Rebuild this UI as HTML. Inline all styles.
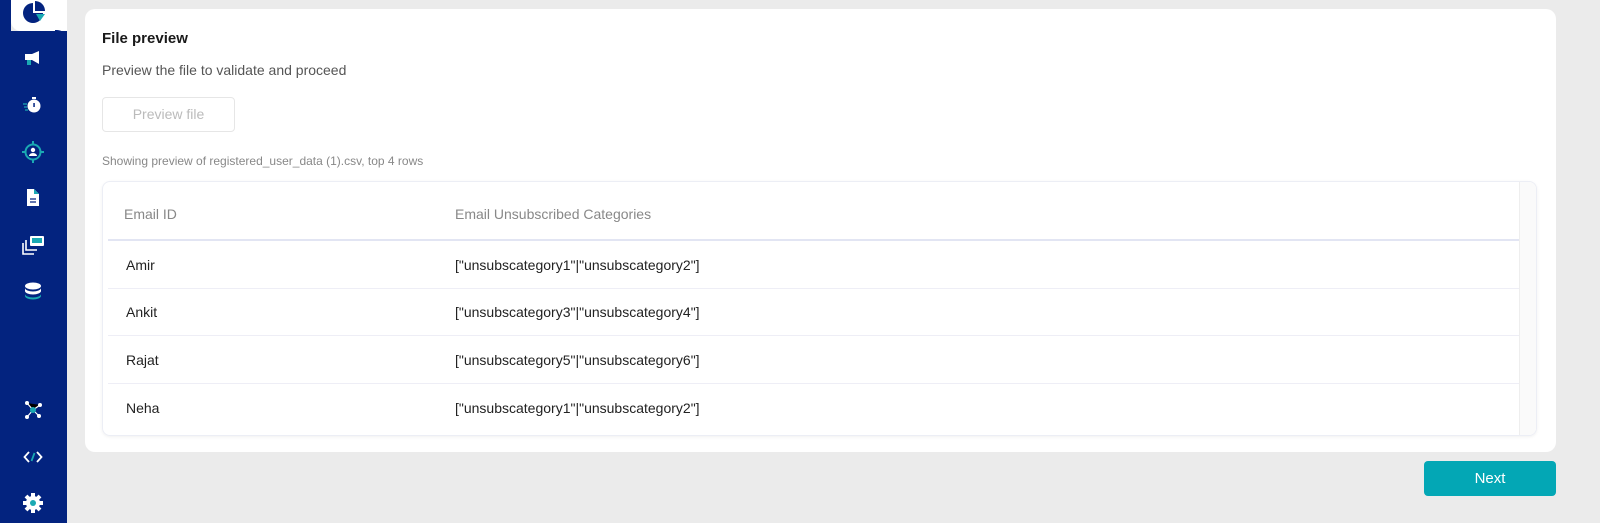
<!DOCTYPE html>
<html><head><meta charset="utf-8"><style>
*{margin:0;padding:0;box-sizing:border-box}
body{width:1600px;height:523px;background:#ebebeb;font-family:"Liberation Sans",sans-serif;position:relative;overflow:hidden}
.sb{position:absolute;left:0;top:0;width:67px;height:523px;background:#03237f}
.tab{position:absolute;left:11px;top:0;width:56px;height:31px;background:#ebebeb;border-radius:0 0 0 10px}
.tab2{position:absolute;left:11px;top:0;width:56px;height:31px;background:#fff;border-radius:0 0 0 10px}
.nav{position:absolute;left:67px;top:0;width:0}
.ic{position:absolute;left:22px;width:22px;height:22px}
.card{position:absolute;left:85px;top:9px;width:1471px;height:443px;background:#fff;border-radius:10px}
h1{position:absolute;left:17px;top:21px;font-size:15px;font-weight:bold;color:#1a1a1a}
.sub{position:absolute;left:17px;top:53px;font-size:14px;color:#555}
.btn{position:absolute;left:17px;top:88px;width:133px;height:35px;border:1px solid #e6e6e6;border-radius:4px;color:#bbb;font-size:14px;text-align:center;line-height:33px}
.note{position:absolute;left:17px;top:145px;font-size:12px;color:#888}
.tbl{position:absolute;left:17px;top:172px;width:1435px;height:255px;border:1px solid #eceef5;border-radius:8px;box-shadow:0 1px 3px rgba(0,0,0,.06);overflow:hidden}
.scroll{position:absolute;right:0;top:0;width:17px;height:100%;background:#fafafa;border-left:1px solid #eee}
.row{position:absolute;left:5px;width:1411px;border-bottom:1px solid #eeeef6;font-size:14px;color:#222}
.row span{position:absolute}
.hd{top:0;height:59px;border-bottom:2px solid #e2e5f3;color:#888}
.next{position:absolute;left:1424px;top:461px;width:132px;height:35px;background:#03a7b5;border-radius:4px;color:#fff;font-size:15px;text-align:center;line-height:35px}
</style></head><body>
<div class="sb"></div>
<div style="position:absolute;left:11px;top:0;width:56px;height:31px;background:#ebebeb"></div>
<div class="tab2"></div>
<div style="position:absolute;left:55px;top:30px;width:12px;height:12px;background:#03237f;border-radius:0 10px 0 0"></div>
<svg style="position:absolute;left:22px;top:1px" width="24" height="24" viewBox="0 0 24 24"><path d="M11 2A10 10 0 1 0 21 12H11Z" fill="#03237f"/><path d="M13 0V10H23A10 10 0 0 0 13 0Z" fill="#03237f"/><path d="M14 13H23L18 20Z" fill="#1aa9b3"/></svg>
<svg style="position:absolute;left:23px;top:48px" width="20" height="20" viewBox="0 0 20 20"><rect x="2" y="6" width="7" height="6" fill="#fff"/><path d="M9 6L16 3V16L9 12Z" fill="#fff"/><rect x="4" y="12" width="4" height="5" fill="#1aa9b3"/></svg>
<svg style="position:absolute;left:22px;top:95px" width="22" height="20" viewBox="0 0 22 20"><circle cx="12" cy="11" r="6.5" fill="#fff"/><rect x="10" y="2" width="4" height="2" fill="#fff"/><rect x="11.3" y="8" width="1.5" height="4" fill="#03237f"/><path d="M1 9h4M2 12h3M3 15h3" stroke="#1aa9b3" stroke-width="1.3"/></svg>
<svg style="position:absolute;left:22px;top:141px" width="22" height="22" viewBox="0 0 22 22"><circle cx="11" cy="11" r="7.5" fill="none" stroke="#1aa9b3" stroke-width="2"/><path d="M11 0v4M11 18v4M0 11h4M18 11h4" stroke="#1aa9b3" stroke-width="2"/><circle cx="11" cy="9" r="2.2" fill="#fff"/><path d="M7 15a4 3 0 0 1 8 0Z" fill="#fff"/></svg>
<svg style="position:absolute;left:25px;top:188px" width="16" height="20" viewBox="0 0 16 20"><path d="M2 1h7l5 5v12H2Z" fill="#fff"/><path d="M9 1v5h5Z" fill="#1aa9b3"/><path d="M5 11h6M5 14h6" stroke="#03237f" stroke-width="1.2"/></svg>
<svg style="position:absolute;left:22px;top:233px" width="24" height="22" viewBox="0 0 24 22"><path d="M1 10v11h11" fill="none" stroke="#fff" stroke-width="1.6"/><path d="M4 7v10h11" fill="none" stroke="#fff" stroke-width="1.6"/><rect x="8" y="3" width="14" height="10" rx="1" fill="#fff"/><rect x="10" y="5" width="10" height="5" fill="#1aa9b3"/></svg>
<svg style="position:absolute;left:23px;top:281px" width="20" height="20" viewBox="0 0 20 20"><ellipse cx="10" cy="5" rx="8" ry="3.5" fill="#fff"/><path d="M2 7v3c0 2 4 3.5 8 3.5s8-1.5 8-3.5V7c0 2-4 3.5-8 3.5S2 9 2 7Z" fill="#fff"/><path d="M2 13v2c0 2 4 3.5 8 3.5s8-1.5 8-3.5v-2c0 2-4 3.5-8 3.5S2 15 2 13Z" fill="#1aa9b3"/></svg>
<svg style="position:absolute;left:23px;top:400px" width="20" height="20" viewBox="0 0 20 20"><path d="M4 3L10 10L17 5M10 10L4 17M10 10L16 16" stroke="#fff" stroke-width="1.2"/><circle cx="4" cy="3" r="2" fill="#fff"/><circle cx="17" cy="5" r="2" fill="#fff"/><circle cx="4" cy="17" r="2" fill="#fff"/><circle cx="16" cy="16" r="2" fill="#fff"/><circle cx="10" cy="10" r="3" fill="#1aa9b3"/></svg>
<svg style="position:absolute;left:23px;top:449px" width="20" height="16" viewBox="0 0 20 16"><path d="M6 3L1.5 8L6 13M14 3L18.5 8L14 13" fill="none" stroke="#fff" stroke-width="1.8"/><path d="M11.5 4L8.5 12" stroke="#1aa9b3" stroke-width="1.8"/></svg>
<svg style="position:absolute;left:22px;top:492px" width="22" height="22" viewBox="0 0 22 22"><circle cx="11" cy="11" r="7" fill="#fff"/><path d="M11 1v20M1 11h20M4 4l14 14M18 4L4 18" stroke="#fff" stroke-width="4"/><circle cx="11" cy="11" r="3" fill="#1aa9b3"/></svg>

<div class="card">
<h1>File preview</h1>
<div class="sub">Preview the file to validate and proceed</div>
<div class="btn">Preview file</div>
<div class="note">Showing preview of registered_user_data (1).csv, top 4 rows</div>
<div class="tbl">
<div class="scroll"></div>
<div class="row hd"><span style="left:16px;top:24px">Email ID</span><span style="left:347px;top:24px">Email Unsubscribed Categories</span></div>
<div class="row" style="top:59px;height:48px"><span style="left:18px;top:16px">Amir</span><span style="left:347px;top:16px">["unsubscategory1"|"unsubscategory2"]</span></div>
<div class="row" style="top:107px;height:47px"><span style="left:18px;top:15px">Ankit</span><span style="left:347px;top:15px">["unsubscategory3"|"unsubscategory4"]</span></div>
<div class="row" style="top:154px;height:48px"><span style="left:18px;top:16px">Rajat</span><span style="left:347px;top:16px">["unsubscategory5"|"unsubscategory6"]</span></div>
<div class="row" style="top:202px;height:52px;border:none"><span style="left:18px;top:16px">Neha</span><span style="left:347px;top:16px">["unsubscategory1"|"unsubscategory2"]</span></div>
</div>
</div>
<div class="next">Next</div>
</body></html>
